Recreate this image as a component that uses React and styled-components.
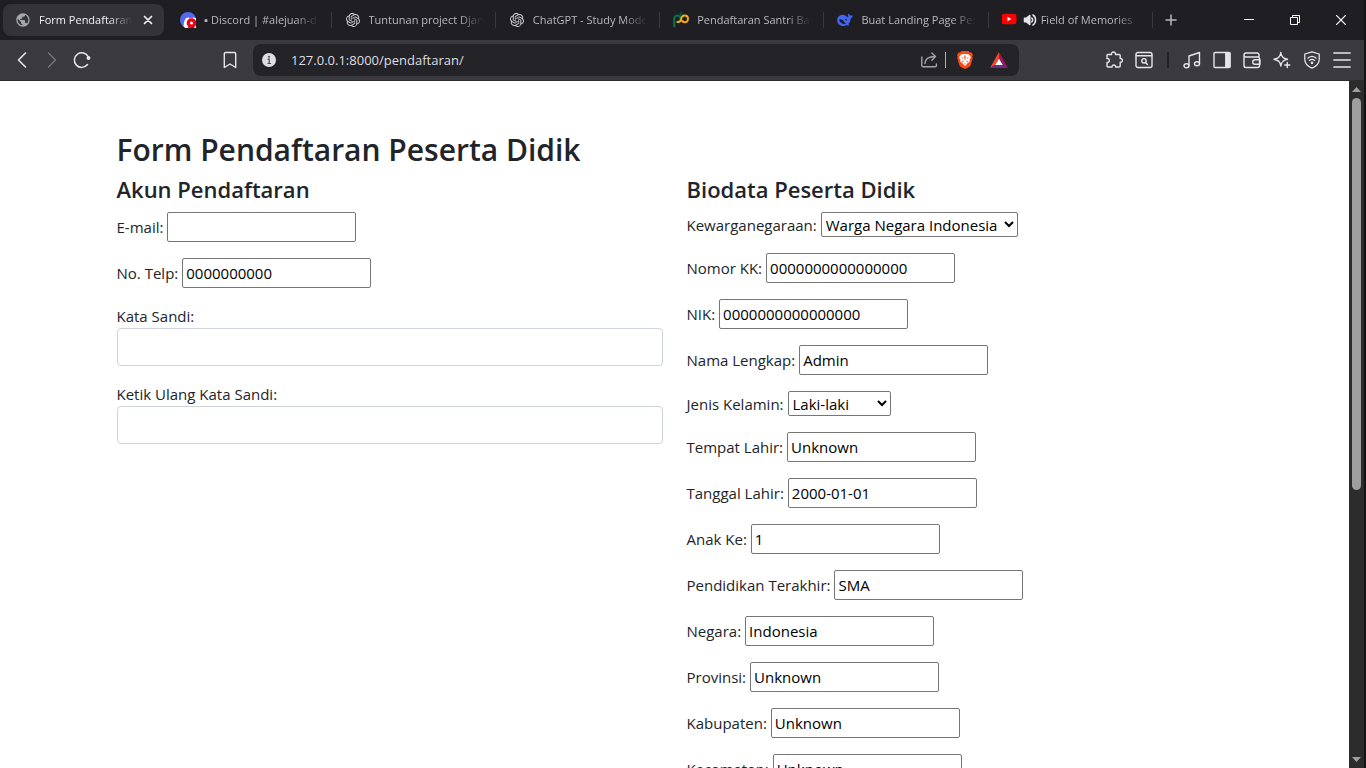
import React from "react";
import styled, { createGlobalStyle } from "styled-components";
import { SiOpenai } from "react-icons/si";
import { FaDiscord, FaYoutube } from "react-icons/fa";
import { MdPublic } from "react-icons/md";

const GlobalStyle = createGlobalStyle`
  *, *::before, *::after { box-sizing: border-box; }
  body {
    margin: 0;
    background: #1f1e23;
    font-family: "Open Sans", "Noto Sans", sans-serif;
    overflow: hidden;
  }
  button { font: inherit; color: inherit; }
`;

const Desktop = styled.div`
  display: flex;
  height: 100vh;
  padding-right: 2px;
  background: #141414;
`;

const BrowserWindow = styled.div`
  flex: 1;
  min-width: 0;
  display: flex;
  flex-direction: column;
`;

const TabStrip = styled.header`
  display: flex;
  height: 40px;
  flex: none;
  padding-left: 3px;
  background: #1f1e23;
`;

const TabList = styled.nav`
  display: flex;
  align-items: center;
  flex: 0 1 1150px;
  min-width: 0;
`;

const Tab = styled.div`
  flex: 1 1 ${(p) => (p.$active ? "98px" : "100px")};
  min-width: 0;
  height: 32px;
  display: flex;
  align-items: center;
  padding: ${(p) => (p.$active ? "0 8px 0 12px" : "0 12px 0 13px")};
  margin-right: ${(p) => (p.$active ? "3px" : "0")};
  border-radius: ${(p) => (p.$active ? "8px" : "0")};
  background: ${(p) => (p.$active ? "#343338" : "transparent")};
  color: ${(p) => (p.$active ? "#f2f2f3" : "#b9b8bc")};
`;

const TabDivider = styled.span`
  width: 1px;
  height: 16px;
  flex: none;
  background: #3a393e;
`;

const Favicon = styled.span`
  display: flex;
  flex: none;
  align-items: center;
  width: 16px;
  height: 16px;
  margin-right: ${(p) => (p.$tight ? "5px" : "8px")};
`;

const AudioMark = styled.span`
  display: flex;
  flex: none;
  margin-right: 4px;
  color: #e6e6e8;
`;

const TabTitle = styled.span`
  flex: 1;
  min-width: 0;
  overflow: hidden;
  white-space: nowrap;
  font-size: 11px;
  line-height: 18px;
  mask-image: linear-gradient(to right, #000 calc(100% - 24px), transparent);
`;

const CloseTab = styled.button`
  display: grid;
  place-items: center;
  width: 16px;
  height: 16px;
  margin-left: 8px;
  padding: 0;
  border: 0;
  background: none;
`;

const NewTab = styled.button`
  width: 36px;
  display: grid;
  place-items: center;
  padding: 0;
  border: 0;
  background: none;
  color: #b9b8bc;
`;

const WindowControls = styled.div`
  display: flex;
  margin-left: auto;
`;

const WindowButton = styled.button`
  width: 46px;
  display: grid;
  place-items: center;
  padding: 0;
  border: 0;
  background: none;
  color: #ffffff;
`;

const Toolbar = styled.div`
  display: flex;
  align-items: center;
  flex: none;
  height: 41px;
  background: #3b3a3f;
  border-bottom: 1px solid #2d2c31;
`;

const NavGroup = styled.div`
  display: flex;
  flex: 0 0 245px;
  padding-left: 7px;
  margin-right: 8px;
`;

const ActionGroup = styled.div`
  display: flex;
  align-items: center;
  justify-content: flex-end;
  flex: 0 0 345px;
  padding-right: 7px;
`;

const ToolButton = styled.button`
  width: 30px;
  height: 30px;
  display: grid;
  place-items: center;
  padding: 0;
  border: 0;
  background: none;
  color: ${(p) => (p.$dim ? "#77767b" : "#e6e6e8")};
  margin-left: ${(p) => (p.$end ? "auto" : "0")};
`;

const ToolDivider = styled.span`
  width: 2px;
  height: 16px;
  margin: 0 8px;
  background: #222126;
`;

const AddressBar = styled.div`
  flex: 1;
  min-width: 0;
  height: 32px;
  display: flex;
  align-items: center;
  padding: 0 10px 0 8px;
  border-radius: 8px;
  background: #242328;
`;

const AddressInput = styled.input`
  flex: 1;
  min-width: 0;
  margin-left: 14px;
  padding: 0;
  border: 0;
  outline: 0;
  background: transparent;
  color: #dedee0;
  font: 13px/20px "Open Sans", "Noto Sans", sans-serif;
`;

const AddressButton = styled.button`
  display: grid;
  place-items: center;
  width: 20px;
  height: 20px;
  padding: 0;
  border: 0;
  background: none;
  color: #a5a4a9;
  margin-left: ${(p) => p.$gap || 0}px;
`;

const AddressDivider = styled.span`
  width: 1px;
  height: 16px;
  margin-left: 6px;
  background: #b0afb4;
`;

const Viewport = styled.div`
  flex: 1;
  min-height: 0;
  display: flex;
  background: #ffffff;
`;

const Page = styled.main`
  flex: 1;
  min-width: 0;
  overflow-y: auto;
  scrollbar-width: none;
  color: #212529;
  font-size: 15px;
  line-height: 24px;
`;

const Container = styled.form`
  max-width: 1140px;
  margin: 48px auto 0;
  padding: 0 12px;
`;

const PageTitle = styled.h1`
  margin: 0 0 4px;
  font-size: 30px;
  line-height: 42px;
  font-weight: 600;
`;

const Columns = styled.div`
  display: grid;
  grid-template-columns: 1fr 1fr;
  column-gap: 24px;
`;

const SectionTitle = styled.h2`
  margin: 0 0 8px;
  font-size: 22px;
  line-height: 29px;
  font-weight: 600;
`;

const FieldRow = styled.p`
  display: flex;
  flex-direction: ${(p) => (p.$stacked ? "column" : "row")};
  align-items: ${(p) => (p.$stacked ? "stretch" : "center")};
  gap: ${(p) => (p.$stacked ? "0" : "4px")};
  margin: 0 0 16px;
`;

const TextInput = styled.input`
  width: 189px;
  height: 30px;
  padding: 0 3px;
  border: 1px solid #767676;
  border-radius: 2px;
  background: #ffffff;
  color: #000000;
  font: inherit;
`;

const PasswordInput = styled.input`
  width: 100%;
  height: 38px;
  padding: 6px 12px;
  border: 1px solid #ced4da;
  border-radius: 4px;
  background: #ffffff;
  font: inherit;
`;

const Select = styled.select`
  width: ${(p) => p.$width}px;
  height: 25px;
  padding: 0;
  border: 1px solid #767676;
  border-radius: 2px;
  background: #ffffff;
  color: #000000;
  font: inherit;
`;

const ScrollTrack = styled.div`
  width: 15px;
  flex: none;
  display: flex;
  flex-direction: column;
  align-items: center;
  padding: 6px 0;
  background: #2c2c2c;
`;

const ScrollThumb = styled.div`
  width: 9px;
  height: 58%;
  flex: 0 1 auto;
  margin: 6px 0 auto;
  border-radius: 5px;
  background: #9f9f9f;
`;

const Line = ({ size = 18, width = 1.4, children, ...rest }) => (
  <svg width={size} height={size} viewBox={`0 0 ${size} ${size}`} fill="none" stroke="currentColor"
    strokeWidth={width} strokeLinecap="round" strokeLinejoin="round" aria-hidden="true" {...rest}>
    {children}
  </svg>
);

const DiscordIcon = () => (
  <svg width="16" height="16" viewBox="0 0 16 16" aria-hidden="true">
    <circle cx="8" cy="8" r="8" fill="#5468f2" />
    <FaDiscord x="3" y="3" width="10" height="10" color="#fff" />
    <circle cx="11.5" cy="11" r="4.8" fill="#f00012" />
    <circle cx="11.5" cy="11" r="1.5" fill="#fff" />
  </svg>
);

const SantriIcon = () => (
  <svg width="16" height="16" viewBox="0 0 16 16" fill="none" strokeLinecap="round" aria-hidden="true">
    <path d="M1.200 14.500V6.800a3.200 3.200 0 0 1 6.400 0c0 2-1.400 3.300-3.100 3.300" stroke="#08734a" strokeWidth="2" />
    <path d="M4.500 10c2.200.2 3.200-.8 3.500-2.400C8.400 5.200 9.600 3.600 11.600 3.600s3.400 1.500 3.400 3.300-1.300 3.300-3 3.300c-1.200 0-2-.5-2.600-1.200" stroke="#f2ac12" strokeWidth="2" />
    <path d="M7 1.500l1.500-1M7 3.400l2.500-1" stroke="#0a5b46" strokeWidth="1.200" />
  </svg>
);

const WhaleIcon = () => (
  <svg width="16" height="16" viewBox="0 0 16 16" aria-hidden="true">
    <path fill="#4168f5" d="M15.700 3.300c-.8.500-1.500.4-2.200.1-.9-.4-1.300-1-1.600-1.900-.9.600-1.100 1.700-.6 2.600.3.700.2 1.200-.2 1.500C9.800 4.300 8.300 3.200 6.500 2.900 3.300 2.600.3 4.800.2 8c-.1 3.400 2.700 6 6.100 6 1.300 0 2.400-.4 3.400-1.100.7.500 1.800.8 2.800.5-.6-.4-1-.9-1.200-1.500 1.700-1.500 2.300-3.400 2.300-5.500 1.300-.4 2.200-1.500 2.100-3.100z" />
    <path fill="#1f1e23" d="M2.100 7.300c2.400-.5 4.100.6 5.100 2.400.5.900 1.200 1.600 2.200 1.900-2.800 1.200-6.800-.4-7.300-4.300z" />
    <path fill="#1f1e23" d="M7.900 6.900c1.100-.4 2.100.3 2.300 1.500-.8.200-1.900-.4-2.300-1.500z" />
  </svg>
);

const YoutubeIcon = () => (
  <svg width="16" height="16" viewBox="0 0 16 16" aria-hidden="true">
    <rect x="4" y="4" width="8" height="8" fill="#fff" />
    <FaYoutube x="-1" y="-1" width="18" height="18" color="#f00" />
  </svg>
);

const SpeakerIcon = () => (
  <Line size={14} width={1.5}>
    <path d="M1.500 5.200h2L6.800 2.500v9L3.500 8.800h-2z" fill="currentColor" />
    <path d="M8.800 5.100c1.100 1 1.100 2.800 0 3.800M10 2c3.400 2.200 3.400 7.800 0 10" />
  </Line>
);

const BraveIcon = () => (
  <svg width="18" height="18" viewBox="0 0 18 18" aria-hidden="true">
    <path d="M5.500 0h7l1.500 1.600h1.500L17 4l-.7 1.800.4 1.200-2 7c-.3.900-.8 1.500-1.500 2L9 18l-4.200-2c-.7-.5-1.200-1.100-1.500-2l-2-7 .4-1.200L1 4l1.500-2.400H4z" fill="#fb4a13" />
    <path d="M5.300 3.300 9 2.900l3.700.4L15 6.300l-1.600 2.800.4 1.500-2.300 1.700L9 14.900l-2.500-2.600-2.300-1.700.4-1.500L3 6.300z" fill="#fff" />
    <path d="M5 6.200l2.500.6-.6 1zM13 6.200l-2.500.6.6 1zM8.300 4.500h1.400L9.400 9h-.8zM6 9.600l2 .9-1.400 1zM12 9.600l-2 .9 1.400 1zM7.800 12.400h2.400L9 13.300z" fill="#fb4a13" />
  </svg>
);

const RewardsIcon = () => (
  <svg width="20" height="18" viewBox="0 0 20 18" aria-hidden="true">
    <path d="M10 1 1 17l5-3 4-7z" fill="#ff4724" />
    <path d="m10 1 9 16-5-3-4-7z" fill="#a0145c" />
    <path d="M1 17h18l-5-3H6z" fill="#662d91" />
    <path d="m10 7.500 3.800 6.500H6.200z" fill="#fff" />
  </svg>
);

const tabs = [
  { title: "Form Pendaftaran Peserta", icon: <MdPublic size={16} color="#a2a6ab" />, active: true },
  { title: "▪ Discord | #alejuan-dev", icon: <DiscordIcon /> },
  { title: "Tuntunan project Django", icon: <SiOpenai size={14} color="#d6d6d8" style={{ margin: "auto" }} /> },
  { title: "ChatGPT - Study Mode", icon: <SiOpenai size={14} color="#d6d6d8" style={{ margin: "auto" }} /> },
  { title: "Pendaftaran Santri Baru", icon: <SantriIcon /> },
  { title: "Buat Landing Page Pesantren", icon: <WhaleIcon /> },
  { title: "Field of Memories", icon: <YoutubeIcon />, audio: true },
];

const biodata = [
  { id: "kewarganegaraan", label: "Kewarganegaraan:", options: ["Warga Negara Indonesia"], width: 197 },
  { id: "kk", label: "Nomor KK:", value: "0000000000000000" },
  { id: "nik", label: "NIK:", value: "0000000000000000" },
  { id: "nama", label: "Nama Lengkap:", value: "Admin" },
  { id: "kelamin", label: "Jenis Kelamin:", options: ["Laki-laki"], width: 103 },
  { id: "tempat", label: "Tempat Lahir:", value: "Unknown" },
  { id: "tanggal", label: "Tanggal Lahir:", value: "2000-01-01" },
  { id: "anak", label: "Anak Ke:", value: "1" },
  { id: "pendidikan", label: "Pendidikan Terakhir:", value: "SMA" },
  { id: "negara", label: "Negara:", value: "Indonesia" },
  { id: "provinsi", label: "Provinsi:", value: "Unknown" },
  { id: "kabupaten", label: "Kabupaten:", value: "Unknown" },
  { id: "kecamatan", label: "Kecamatan:", value: "Unknown" },
];

function Field({ id, label, value, options, width }) {
  return (
    <FieldRow>
      <label htmlFor={id}>{label}</label>
      {options ? (
        <Select id={id} $width={width}>
          {options.map((o) => <option key={o}>{o}</option>)}
        </Select>
      ) : (
        <TextInput id={id} type="text" defaultValue={value} />
      )}
    </FieldRow>
  );
}

function PasswordField({ id, label }) {
  return (
    <FieldRow $stacked>
      <label htmlFor={id}>{label}</label>
      <PasswordInput id={id} type="password" />
    </FieldRow>
  );
}

function Tabs() {
  return (
    <TabStrip>
      <TabList>
        {tabs.map((t) => (
          <React.Fragment key={t.title}>
            <Tab $active={t.active}>
              <Favicon $tight={t.audio}>{t.icon}</Favicon>
              {t.audio && <AudioMark><SpeakerIcon /></AudioMark>}
              <TabTitle>{t.title}</TabTitle>
              {t.active && (
                <CloseTab aria-label="Close tab">
                  <Line size={10} width={1.7}><path d="m1.500 1.500 7 7m0-7-7 7" /></Line>
                </CloseTab>
              )}
            </Tab>
            {!t.active && <TabDivider />}
          </React.Fragment>
        ))}
      </TabList>
      <NewTab aria-label="New tab">
        <Line size={12} width={1.5}><path d="M6 1v10M1 6h10" /></Line>
      </NewTab>
      <WindowControls>
        <WindowButton aria-label="Minimize">
          <svg width="10" height="10"><path d="M0 4.500h10" stroke="currentColor" /></svg>
        </WindowButton>
        <WindowButton aria-label="Restore">
          <svg width="10" height="10" fill="none" stroke="currentColor"><path d="M.5 2.500h7v7h-7zM2.500 2.500v-2h7v7h-2" /></svg>
        </WindowButton>
        <WindowButton aria-label="Close">
          <svg width="10" height="10" fill="none" stroke="currentColor" strokeWidth="1.200"><path d="m0 0 10 10M10 0 0 10" /></svg>
        </WindowButton>
      </WindowControls>
    </TabStrip>
  );
}

function BrowserToolbar() {
  return (
    <Toolbar>
      <NavGroup>
        <ToolButton aria-label="Back"><Line width={1.6}><path d="M12.500 2 5.500 9l7 7" /></Line></ToolButton>
        <ToolButton aria-label="Forward" $dim><Line width={1.4}><path d="m5.500 2 7 7-7 7" /></Line></ToolButton>
        <ToolButton aria-label="Reload">
          <Line width={1.5}>
            <path d="M14.500 13.500A7.300 7.300 0 1 1 15.300 6" />
            <circle cx="15.500" cy="7" r="1.200" fill="currentColor" />
          </Line>
        </ToolButton>
        <ToolButton aria-label="Bookmark" $end>
          <Line><path d="M3.300 2.800c0-.8.500-1.300 1.300-1.300h8.800c.8 0 1.300.5 1.300 1.300v13.700L9 13l-5.700 3.500z" /></Line>
        </ToolButton>
      </NavGroup>
      <AddressBar>
        <svg width="16" height="16" viewBox="0 0 16 16" aria-hidden="true">
          <circle cx="8" cy="8" r="7" fill="#dedee1" />
          <path d="M6.500 7.200h1.700v4.300M6.500 11.500h3.400" stroke="#4b4a50" strokeWidth="1.200" fill="none" />
          <circle cx="8" cy="4.800" r="1" fill="#4b4a50" />
        </svg>
        <AddressInput aria-label="Address" defaultValue="127.0.0.1:8000/pendaftaran/" />
        <AddressButton aria-label="Share">
          <Line><path d="M1.800 6v8.500c0 .8.500 1.300 1.300 1.300h12c.8 0 1.300-.5 1.300-1.300V13M5 12.500c0-4.500 2.500-7 10.300-7M11.800 2l3.700 3.500-3.700 3.700" /></Line>
        </AddressButton>
        <AddressDivider />
        <AddressButton aria-label="Shields" $gap={9}><BraveIcon /></AddressButton>
        <AddressButton aria-label="Rewards" $gap={14}><RewardsIcon /></AddressButton>
      </AddressBar>
      <ActionGroup>
        <ToolButton aria-label="Extensions">
          <Line><path d="M3 3.500h3.600c-.8-3.300 4.600-3.300 3.900 0h3.700c.6 0 1 .4 1 1v3c3-.6 3 4.200 0 3.700V15c0 .6-.4 1-1 1h-3.600c.5-2.700-4-2.700-3.500 0H3c-.6 0-1-.4-1-1v-3.500c3.100.6 3.100-4.600 0-4V4.500c0-.6.4-1 1-1z" /></Line>
        </ToolButton>
        <ToolButton aria-label="Search tabs">
          <Line><rect x="1" y="1.500" width="16" height="15" rx="2" /><path d="M1 4.700h16M10.500 11.500l2 2" /><circle cx="9" cy="9.800" r="2.200" /></Line>
        </ToolButton>
        <ToolDivider />
        <ToolButton aria-label="Media">
          <Line><path d="M6 14.500V5l10.500-3.500v11" /><ellipse cx="3.500" cy="14.800" rx="2.500" ry="2" /><ellipse cx="14" cy="12.800" rx="2.500" ry="2" /></Line>
        </ToolButton>
        <ToolButton aria-label="Side panel">
          <Line><rect x="1" y="1.500" width="16" height="15" rx="1" /><path d="M12.800 2h4v14h-4z" fill="currentColor" /></Line>
        </ToolButton>
        <ToolButton aria-label="Wallet">
          <Line><path d="M16 6V4c0-1.300-.9-2-2-2H3c-1.200 0-2 .8-2 2v10.500c0 1.200.8 2 2 2h11.500c1.200 0 2-.8 2-2V7.500c0-.9-.6-1.500-1.500-1.500H3C1.800 6 1 5.200 1 4M17 8.800h-5c-3 0-3 4.500 0 4.500h5z" /></Line>
        </ToolButton>
        <ToolButton aria-label="Leo AI">
          <Line><path d="M7.800 1.500c.6 4.200 2 5.700 6.700 6.800-2.200.5-3.700 1.100-4.700 2.100M7.800 1.500C7.200 5.700 5.800 7.200 1 8.300c4.800 1.100 6.200 2.600 6.800 6.700.3-1.500.6-2.500 1-3.300M14.300 11.500v5M11.800 14h5" /></Line>
        </ToolButton>
        <ToolButton aria-label="VPN">
          <Line width={1.3}><path d="M9 .8 16.200 3v5.500c0 4-2.700 6.800-7.200 8.700-4.500-1.900-7.200-4.700-7.200-8.700V3zM5 7c2.500-2 5.500-2 8 0M6.300 9.400c1.700-1.300 3.700-1.300 5.400 0" /><circle cx="9" cy="11.800" r=".7" fill="currentColor" /></Line>
        </ToolButton>
        <ToolButton aria-label="Menu"><Line width={1.7}><path d="M1 2h16M1 9h16M1 16h16" /></Line></ToolButton>
      </ActionGroup>
    </Toolbar>
  );
}

export default function App() {
  return (
    <>
      <GlobalStyle />
      <Desktop>
        <BrowserWindow>
          <Tabs />
          <BrowserToolbar />
          <Viewport>
            <Page>
              <Container>
                <PageTitle>Form Pendaftaran Peserta Didik</PageTitle>
                <Columns>
                  <section>
                    <SectionTitle>Akun Pendaftaran</SectionTitle>
                    <Field id="email" label="E-mail:" />
                    <Field id="telp" label="No. Telp:" value="0000000000" />
                    <PasswordField id="sandi" label="Kata Sandi:" />
                    <PasswordField id="sandi-ulang" label="Ketik Ulang Kata Sandi:" />
                  </section>
                  <section>
                    <SectionTitle>Biodata Peserta Didik</SectionTitle>
                    {biodata.map((f) => <Field key={f.id} {...f} />)}
                  </section>
                </Columns>
              </Container>
            </Page>
            <ScrollTrack aria-hidden="true">
              <svg width="9" height="5"><path d="M4.500 0 9 5H0z" fill="#9f9f9f" /></svg>
              <ScrollThumb />
              <svg width="9" height="5"><path d="M0 0h9L4.500 5z" fill="#9f9f9f" /></svg>
            </ScrollTrack>
          </Viewport>
        </BrowserWindow>
      </Desktop>
    </>
  );
}
